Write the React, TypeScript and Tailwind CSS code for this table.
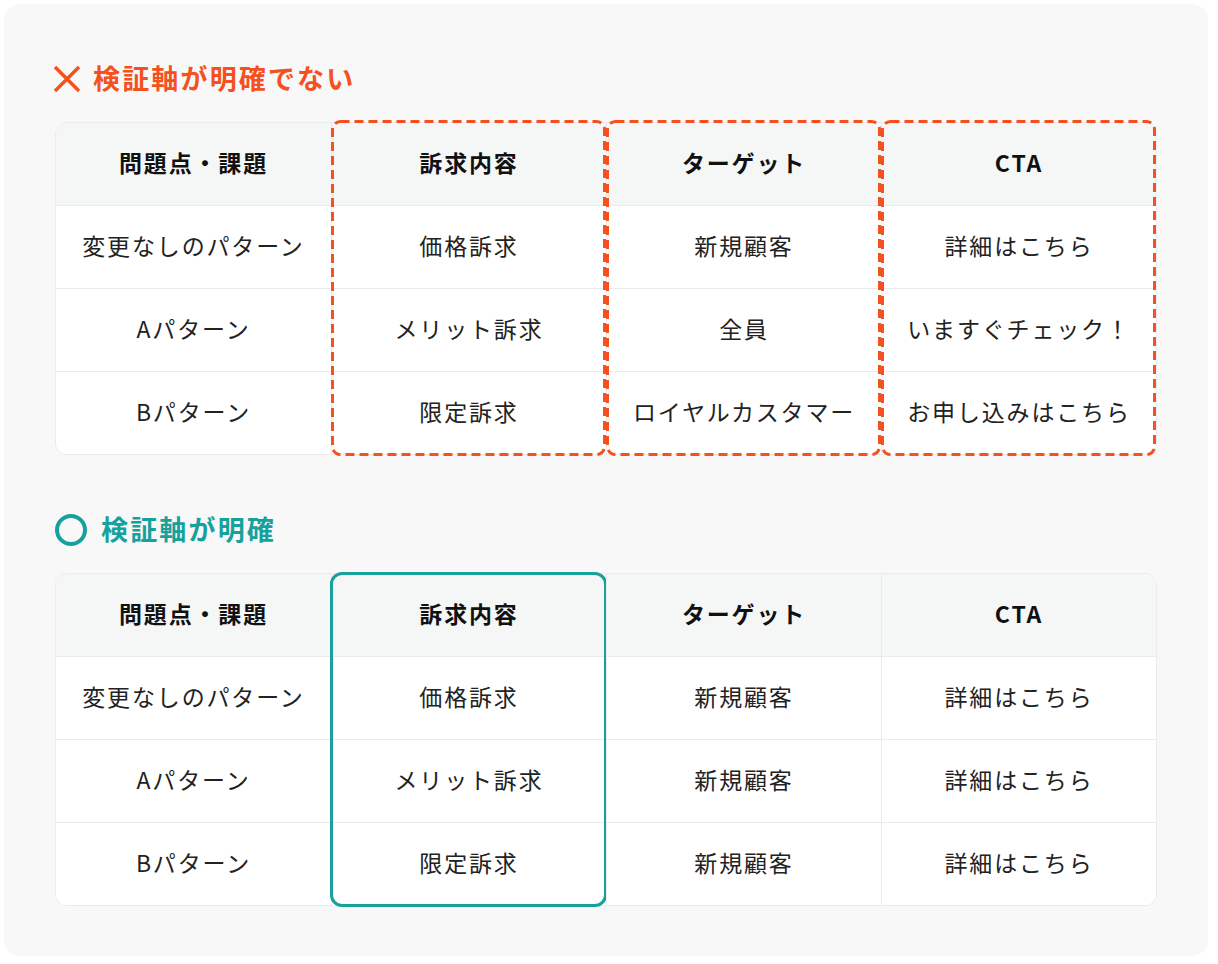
import React from 'react';

type Mark = 'dashed' | 'solid' | null;

const headers = ['問題点・課題', '訴求内容', 'ターゲット', 'CTA'];

const badRows = [
    ['変更なしのパターン', '価格訴求', '新規顧客', '詳細はこちら'],
    ['Aパターン', 'メリット訴求', '全員', 'いますぐチェック！'],
    ['Bパターン', '限定訴求', 'ロイヤルカスタマー', 'お申し込みはこちら'],
];

const goodRows = [
    ['変更なしのパターン', '価格訴求', '新規顧客', '詳細はこちら'],
    ['Aパターン', 'メリット訴求', '新規顧客', '詳細はこちら'],
    ['Bパターン', '限定訴求', '新規顧客', '詳細はこちら'],
];

// dashed frame drawn as svg so the dash length matches
function DashedFrame() {
    return (
        <svg
            width="276"
            height="336"
            className="pointer-events-none absolute -top-[3px] -left-[1px]"
        >
            <rect
                x="1.5"
                y="1.5"
                width="272"
                height="333"
                rx="8"
                fill="none"
                stroke="#f4511e"
                strokeWidth="3"
                strokeDasharray="9 5"
            />
        </svg>
    );
}

function Column({ index, rows, mark }: { index: number; rows: string[][]; mark: Mark }) {
    const first = index === 0;
    const last = index === headers.length - 1;
    return (
        <div className={`relative flex flex-col ${first ? '' : 'border-l border-[#ebebeb]'}`}>
            <div
                className={`flex h-[82px] items-center justify-center bg-[#f5f6f6] pb-[4px] text-[23px] font-bold tracking-[0.08em] text-[#111] ${first ? 'rounded-tl-[11px]' : ''} ${last ? 'rounded-tr-[11px]' : ''}`}
            >
                {headers[index]}
            </div>
            {rows.map((r, i) => (
                <div
                    key={i}
                    className={`flex h-[83px] items-center justify-center border-t border-[#ebebeb] bg-white pb-[4px] text-[23px] tracking-[0.08em] text-[#222] ${i === rows.length - 1 && first ? 'rounded-bl-[11px]' : ''} ${i === rows.length - 1 && last ? 'rounded-br-[11px]' : ''}`}
                >
                    {r[index]}
                </div>
            ))}
            {mark === 'dashed' && <DashedFrame />}
            {mark === 'solid' && (
                <div className="pointer-events-none absolute -top-[2px] -bottom-[2px] -left-[2px] -right-[1px] rounded-[12px] border-[3px] border-[#17a19c]" />
            )}
        </div>
    );
}

function Table({ rows, marks }: { rows: string[][]; marks: Mark[] }) {
    return (
        <div className="grid grid-cols-4 rounded-[12px] border border-[#ebebeb] bg-white">
            {headers.map((_, i) => (
                <Column key={i} index={i} rows={rows} mark={marks[i]} />
            ))}
        </div>
    );
}

export default function App() {
    return (
        <div
            className="min-h-screen bg-white p-[4px]"
            style={{ fontFamily: '"Noto Sans CJK JP", "Noto Sans", sans-serif' }}
        >
            <div className="w-[1204px] rounded-[16px] bg-[#f8f8f8] px-[51px] pt-[59px] pb-[50px]">
                {/* bad example */}
                <div className="flex h-[32px] items-center gap-[11px]">
                    <svg width="30" height="30" viewBox="0 0 30 30" className="-ml-[3px]">
                        <path d="M3 3 L27 27 M27 3 L3 27" stroke="#f4511e" strokeWidth="3.5" strokeLinecap="butt" />
                    </svg>
                    <h2 className="pb-[2px] text-[27px] font-bold tracking-[0.08em] text-[#f4511e]">検証軸が明確でない</h2>
                </div>
                <div className="mt-[27px]">
                    <Table rows={badRows} marks={[null, 'dashed', 'dashed', 'dashed']} />
                </div>

                {/* good example */}
                <div className="mt-[59px] flex h-[32px] items-center gap-[14px]">
                    <svg width="32" height="32" viewBox="0 0 32 32">
                        <circle cx="16" cy="16" r="14" fill="none" stroke="#17a19c" strokeWidth="4" />
                    </svg>
                    <h2 className="pb-[2px] text-[27px] font-bold tracking-[0.08em] text-[#17a19c]">検証軸が明確</h2>
                </div>
                <div className="mt-[27px]">
                    <Table rows={goodRows} marks={[null, 'solid', null, null]} />
                </div>
            </div>
        </div>
    );
}
